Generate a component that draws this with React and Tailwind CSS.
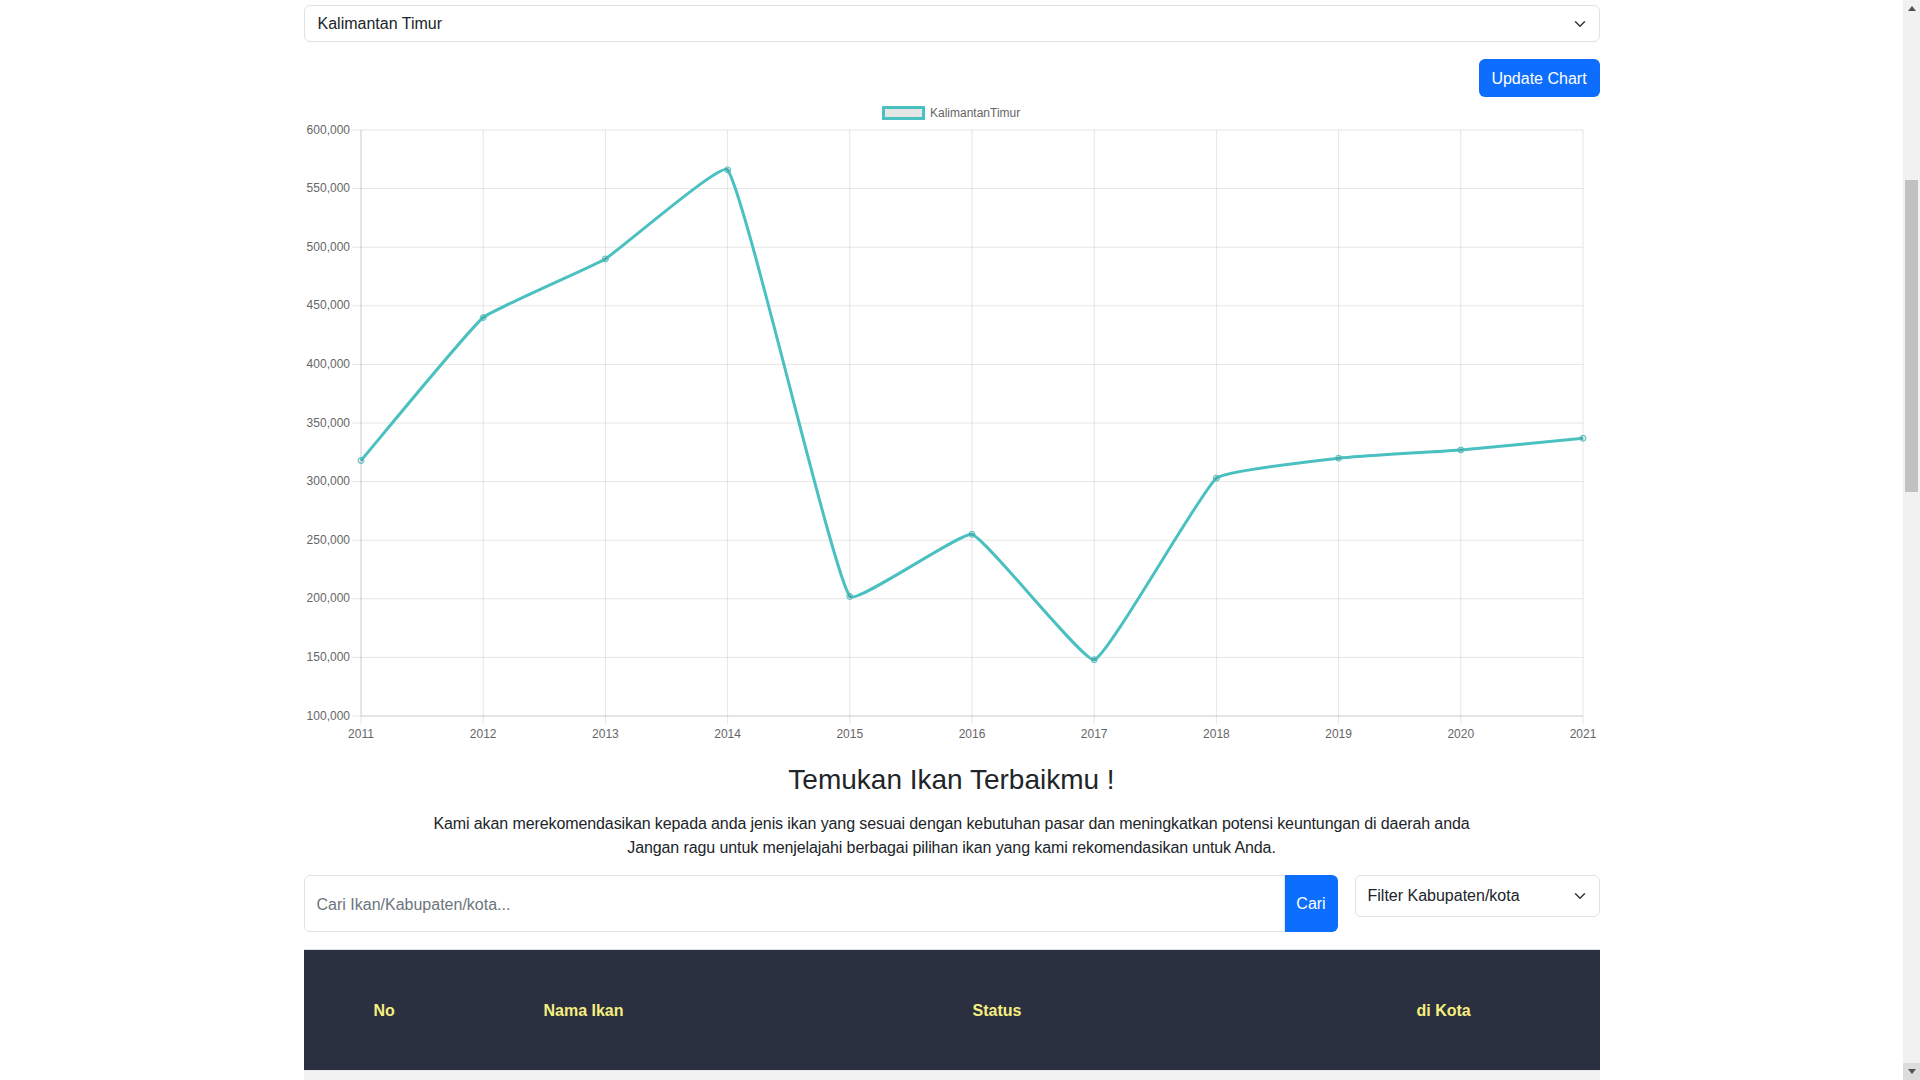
import React from 'react'

const years = [2011, 2012, 2013, 2014, 2015, 2016, 2017, 2018, 2019, 2020, 2021]
const values = [318000, 440000, 490000, 566000, 202000, 255000, 148000, 303000, 320000, 327000, 337000]
const yTicks = [600000, 550000, 500000, 450000, 400000, 350000, 300000, 250000, 200000, 150000, 100000]

const area = { left: 361, right: 1583, top: 130, bottom: 716 }
const px = (i) => area.left + i * ((area.right - area.left) / 10)
const py = (v) => area.bottom - ((v - 100000) / 500000) * (area.bottom - area.top)
const clamp = (n, a, b) => Math.min(Math.max(n, a), b)

// same spline as chart.js line with tension 0.1
function linePath(pts, t) {
  const cps = pts.map((p, i) => {
    const prev = pts[i - 1] || p
    const next = pts[i + 1] || p
    const d01 = Math.hypot(p.x - prev.x, p.y - prev.y)
    const d12 = Math.hypot(next.x - p.x, next.y - p.y)
    let s01 = d01 / (d01 + d12)
    let s12 = d12 / (d01 + d12)
    if (isNaN(s01)) s01 = 0
    if (isNaN(s12)) s12 = 0
    const fa = t * s01
    const fb = t * s12
    return {
      a: { x: clamp(p.x - fa * (next.x - prev.x), area.left, area.right), y: clamp(p.y - fa * (next.y - prev.y), area.top, area.bottom) },
      b: { x: clamp(p.x + fb * (next.x - prev.x), area.left, area.right), y: clamp(p.y + fb * (next.y - prev.y), area.top, area.bottom) },
    }
  })
  let d = `M${pts[0].x},${pts[0].y}`
  for (let i = 1; i < pts.length; i++) {
    d += ` C${cps[i - 1].b.x},${cps[i - 1].b.y} ${cps[i].a.x},${cps[i].a.y} ${pts[i].x},${pts[i].y}`
  }
  return d
}

function Chevron() {
  return (
    <svg width="16" height="12" viewBox="0 0 16 16" fill="none" stroke="#343a40" strokeWidth="2" strokeLinecap="round" strokeLinejoin="round">
      <path d="m2 5 6 6 6-6" />
    </svg>
  )
}

function LineChart() {
  const pts = values.map((v, i) => ({ x: px(i), y: py(v) }))
  const grid = 'rgba(0,0,0,0.1)'
  return (
    <svg className="block" width="1296" height="650" viewBox="304 97 1296 650" fontFamily="'Liberation Sans', Arial, sans-serif">
      <rect x="883.5" y="107.5" width="40" height="11" fill="rgba(0,0,0,0.1)" stroke="rgb(75,192,192)" strokeWidth="3" />
      <text x="930" y="116.5" fontSize="12" fill="#666">KalimantanTimur</text>

      {yTicks.map((v) => (
        <g key={v}>
          <line x1="352" x2={area.right} y1={py(v)} y2={py(v)} stroke={grid} />
          <text x="350" y={py(v) + 3.5} fontSize="12" fill="#666" textAnchor="end">
            {v.toLocaleString('en-US')}
          </text>
        </g>
      ))}
      {years.map((y, i) => (
        <g key={y}>
          <line x1={px(i)} x2={px(i)} y1={area.top} y2={area.bottom + 8} stroke={grid} />
          <text x={px(i)} y="738" fontSize="12" fill="#666" textAnchor="middle">{y}</text>
        </g>
      ))}
      <line x1={area.left} x2={area.right} y1={area.bottom} y2={area.bottom} stroke={grid} />
      <line x1={area.left} x2={area.left} y1={area.top} y2={area.bottom} stroke={grid} />

      <path d={linePath(pts, 0.1)} fill="none" stroke="rgb(75,192,192)" strokeWidth="3" />
      {pts.map((p, i) => (
        <circle key={i} cx={p.x} cy={p.y} r="3" fill="rgba(0,0,0,0.1)" stroke="rgb(75,192,192)" strokeWidth="1" />
      ))}
    </svg>
  )
}

function Scrollbar() {
  return (
    <div className="w-[17px] h-[1080px] bg-[#f1f1f1] flex flex-col">
      <div className="h-[17px] flex items-center justify-center">
        <svg width="8" height="5" viewBox="0 0 8 5"><path d="M0 5 L4 0 L8 5 Z" fill="#505050" /></svg>
      </div>
      <div className="h-[163px]" />
      <div className="h-[312px] mx-[2px] bg-[#c1c1c1]" />
      <div className="flex-1" />
      <div className="h-[17px] bg-[#dcdcdc] flex items-center justify-center">
        <svg width="8" height="5" viewBox="0 0 8 5"><path d="M0 0 L4 5 L8 0 Z" fill="#505050" /></svg>
      </div>
    </div>
  )
}

export default function App() {
  return (
    <div className="w-[1920px] h-[1080px] overflow-hidden flex bg-white text-[#212529] font-['Liberation_Sans',Arial,sans-serif]">
      <div className="flex-1 overflow-hidden">
        <div className="w-[1296px] mx-auto pt-[5px]">
          <div className="h-[37px] border border-[#dee2e6] rounded-md flex items-center justify-between pl-[13px] pr-[11px] text-[16px]">
            <span className="pt-[1px]">Kalimantan Timur</span>
            <Chevron />
          </div>

          <div className="flex justify-end mt-[17px]">
            <button className="h-[38px] w-[121px] bg-[#0d6efd] rounded-md text-white text-[16px] pt-[1px]">Update Chart</button>
          </div>

          <LineChart />

          <h3 className="mt-[15px] h-[34px] leading-[34px] text-[28px] font-medium text-center pt-[1px]">Temukan Ikan Terbaikmu !</h3>
          <p className="mt-[16px] text-[16px] leading-[24px] text-center tracking-[-0.1px]">
            Kami akan merekomendasikan kepada anda jenis ikan yang sesuai dengan kebutuhan pasar dan meningkatkan potensi keuntungan di daerah anda
            <br />
            Jangan ragu untuk menjelajahi berbagai pilihan ikan yang kami rekomendasikan untuk Anda.
          </p>

          <div className="mt-[15px] flex items-start gap-[17px]">
            <div className="flex w-[1034px] h-[57px]">
              <input
                className="flex-1 h-full border border-[#dee2e6] rounded-l-md pl-[12px] pt-[2px] text-[16px] outline-none placeholder:text-[#6c757d]"
                placeholder="Cari Ikan/Kabupaten/kota..."
              />
              <button className="w-[53px] h-full bg-[#0d6efd] rounded-r-md text-white text-[16px]">Cari</button>
            </div>
            <div className="flex-1 h-[42px] border border-[#dee2e6] rounded-md flex items-center justify-between pl-[12px] pr-[11px] text-[16px]">
              <span>Filter Kabupaten/kota</span>
              <Chevron />
            </div>
          </div>

          <div className="mt-[17px] h-[121px] bg-[#2a3040] border-t border-[#dee2e6] flex items-center pt-[2px] text-[16px] font-bold text-[#f7ee7f]">
            <div className="w-[240px] pl-[70px]">No</div>
            <div className="w-[429px]">Nama Ikan</div>
            <div className="w-[444px]">Status</div>
            <div className="flex-1">di Kota</div>
          </div>
          <div className="h-[20px] bg-[#f2f2f2] border-t border-[#e5e7eb]" />
        </div>
      </div>
      <Scrollbar />
    </div>
  )
}
